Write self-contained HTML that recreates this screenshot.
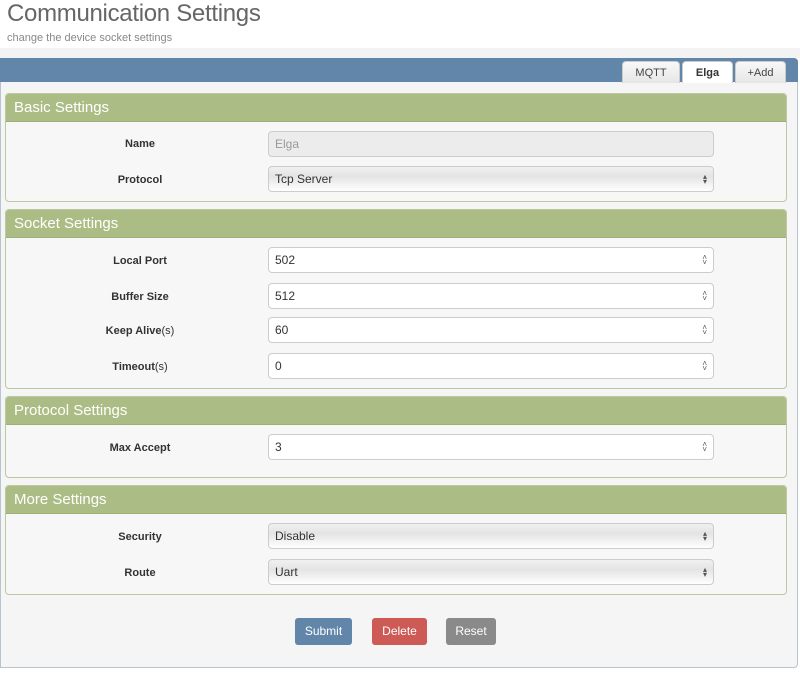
<!DOCTYPE html>
<html><head><style>
*{box-sizing:border-box;margin:0;padding:0}
body{width:800px;height:679px;background:#fff;font-family:"Liberation Sans",sans-serif;position:relative;overflow:hidden}
.a{position:absolute}
h1{position:absolute;left:7px;top:0;font-size:24px;font-weight:normal;color:#666;letter-spacing:-0.3px}
.sub{left:7px;top:32px;font-size:11px;color:#888}
.strip{left:0;top:48px;width:800px;height:10px;background:#f3f3f3}
.panel{left:0;top:58px;width:798px;height:610px;background:#f5f5f5;border:1px solid #b8c4d0;border-top:none;border-radius:0 4px 4px 0}
.bar{left:0;top:58px;width:798px;height:24px;background:#6286aa;border-radius:0 4px 0 0}
.tab{top:61px;height:22px;border:1px solid #ccc;border-bottom:none;border-radius:4px 4px 0 0;background:linear-gradient(#f8f8f8,#e6e6e6);font-size:11px;color:#444;text-align:center;line-height:22px}
.sec{left:5px;width:782px;border:1px solid #bcc89f;border-radius:4px;background:#f7f7f7;overflow:hidden}
.sec .hd{height:28px;background:#abbd84;color:#fff;font-size:15px;line-height:28px;padding-left:8px;border-bottom:1px solid #9caf76}
.lbl{width:280px;left:0;text-align:center;font-size:11px;font-weight:bold;color:#333}
.lbl span{font-weight:normal}
.in{left:268px;width:446px;height:26px;border:1px solid #ccc;border-radius:4px;background:#fff;font-size:12px;color:#333;line-height:24px;padding-left:6px}
.in.sel{background:linear-gradient(#f0f0f0,#e4e4e4 40%,#fff)}
.in.dis{background:#ececec;color:#999}
.arr{position:absolute;right:6px;top:0;font-size:8px;line-height:5px;color:#555;padding-top:7px}
.btn{top:618px;height:27px;border-radius:3px;color:#fff;font-size:12px;text-align:center;line-height:27px}
</style></head><body>
<h1>Communication Settings</h1>
<div class="a sub">change the device socket settings</div>
<div class="a strip"></div>
<div class="a panel"></div>
<div class="a bar"></div>
<div class="a tab" style="left:622px;width:58px">MQTT</div>
<div class="a tab" style="left:682px;width:51px;background:#fff;font-weight:bold;color:#333">Elga</div>
<div class="a tab" style="left:735px;width:51px">+Add</div>

<div class="a sec" style="top:93px;height:109px"><div class="hd">Basic Settings</div></div>
<div class="a sec" style="top:209px;height:180px"><div class="hd">Socket Settings</div></div>
<div class="a sec" style="top:396px;height:82px"><div class="hd">Protocol Settings</div></div>
<div class="a sec" style="top:485px;height:110px"><div class="hd">More Settings</div></div>

<div class="a lbl" style="top:138px">Name</div>
<div class="a in dis" style="top:131px">Elga</div>
<div class="a lbl" style="top:174px">Protocol</div>
<div class="a in sel" style="top:166px">Tcp Server<div class="arr">▴<br>▾</div></div>

<div class="a lbl" style="top:255px">Local Port</div>
<div class="a in" style="top:247px">502<div class="arr">˄<br>˅</div></div>
<div class="a lbl" style="top:291px">Buffer Size</div>
<div class="a in" style="top:283px">512<div class="arr">˄<br>˅</div></div>
<div class="a lbl" style="top:325px">Keep Alive<span>(s)</span></div>
<div class="a in" style="top:317px">60<div class="arr">˄<br>˅</div></div>
<div class="a lbl" style="top:361px">Timeout<span>(s)</span></div>
<div class="a in" style="top:353px">0<div class="arr">˄<br>˅</div></div>

<div class="a lbl" style="top:442px">Max Accept</div>
<div class="a in" style="top:434px">3<div class="arr">˄<br>˅</div></div>

<div class="a lbl" style="top:531px">Security</div>
<div class="a in sel" style="top:523px">Disable<div class="arr">▴<br>▾</div></div>
<div class="a lbl" style="top:567px">Route</div>
<div class="a in sel" style="top:559px">Uart<div class="arr">▴<br>▾</div></div>

<div class="a btn" style="left:295px;width:57px;background:#6286aa">Submit</div>
<div class="a btn" style="left:372px;width:55px;background:#cd5a55">Delete</div>
<div class="a btn" style="left:446px;width:50px;background:#8a8a8a">Reset</div>
</body></html>
